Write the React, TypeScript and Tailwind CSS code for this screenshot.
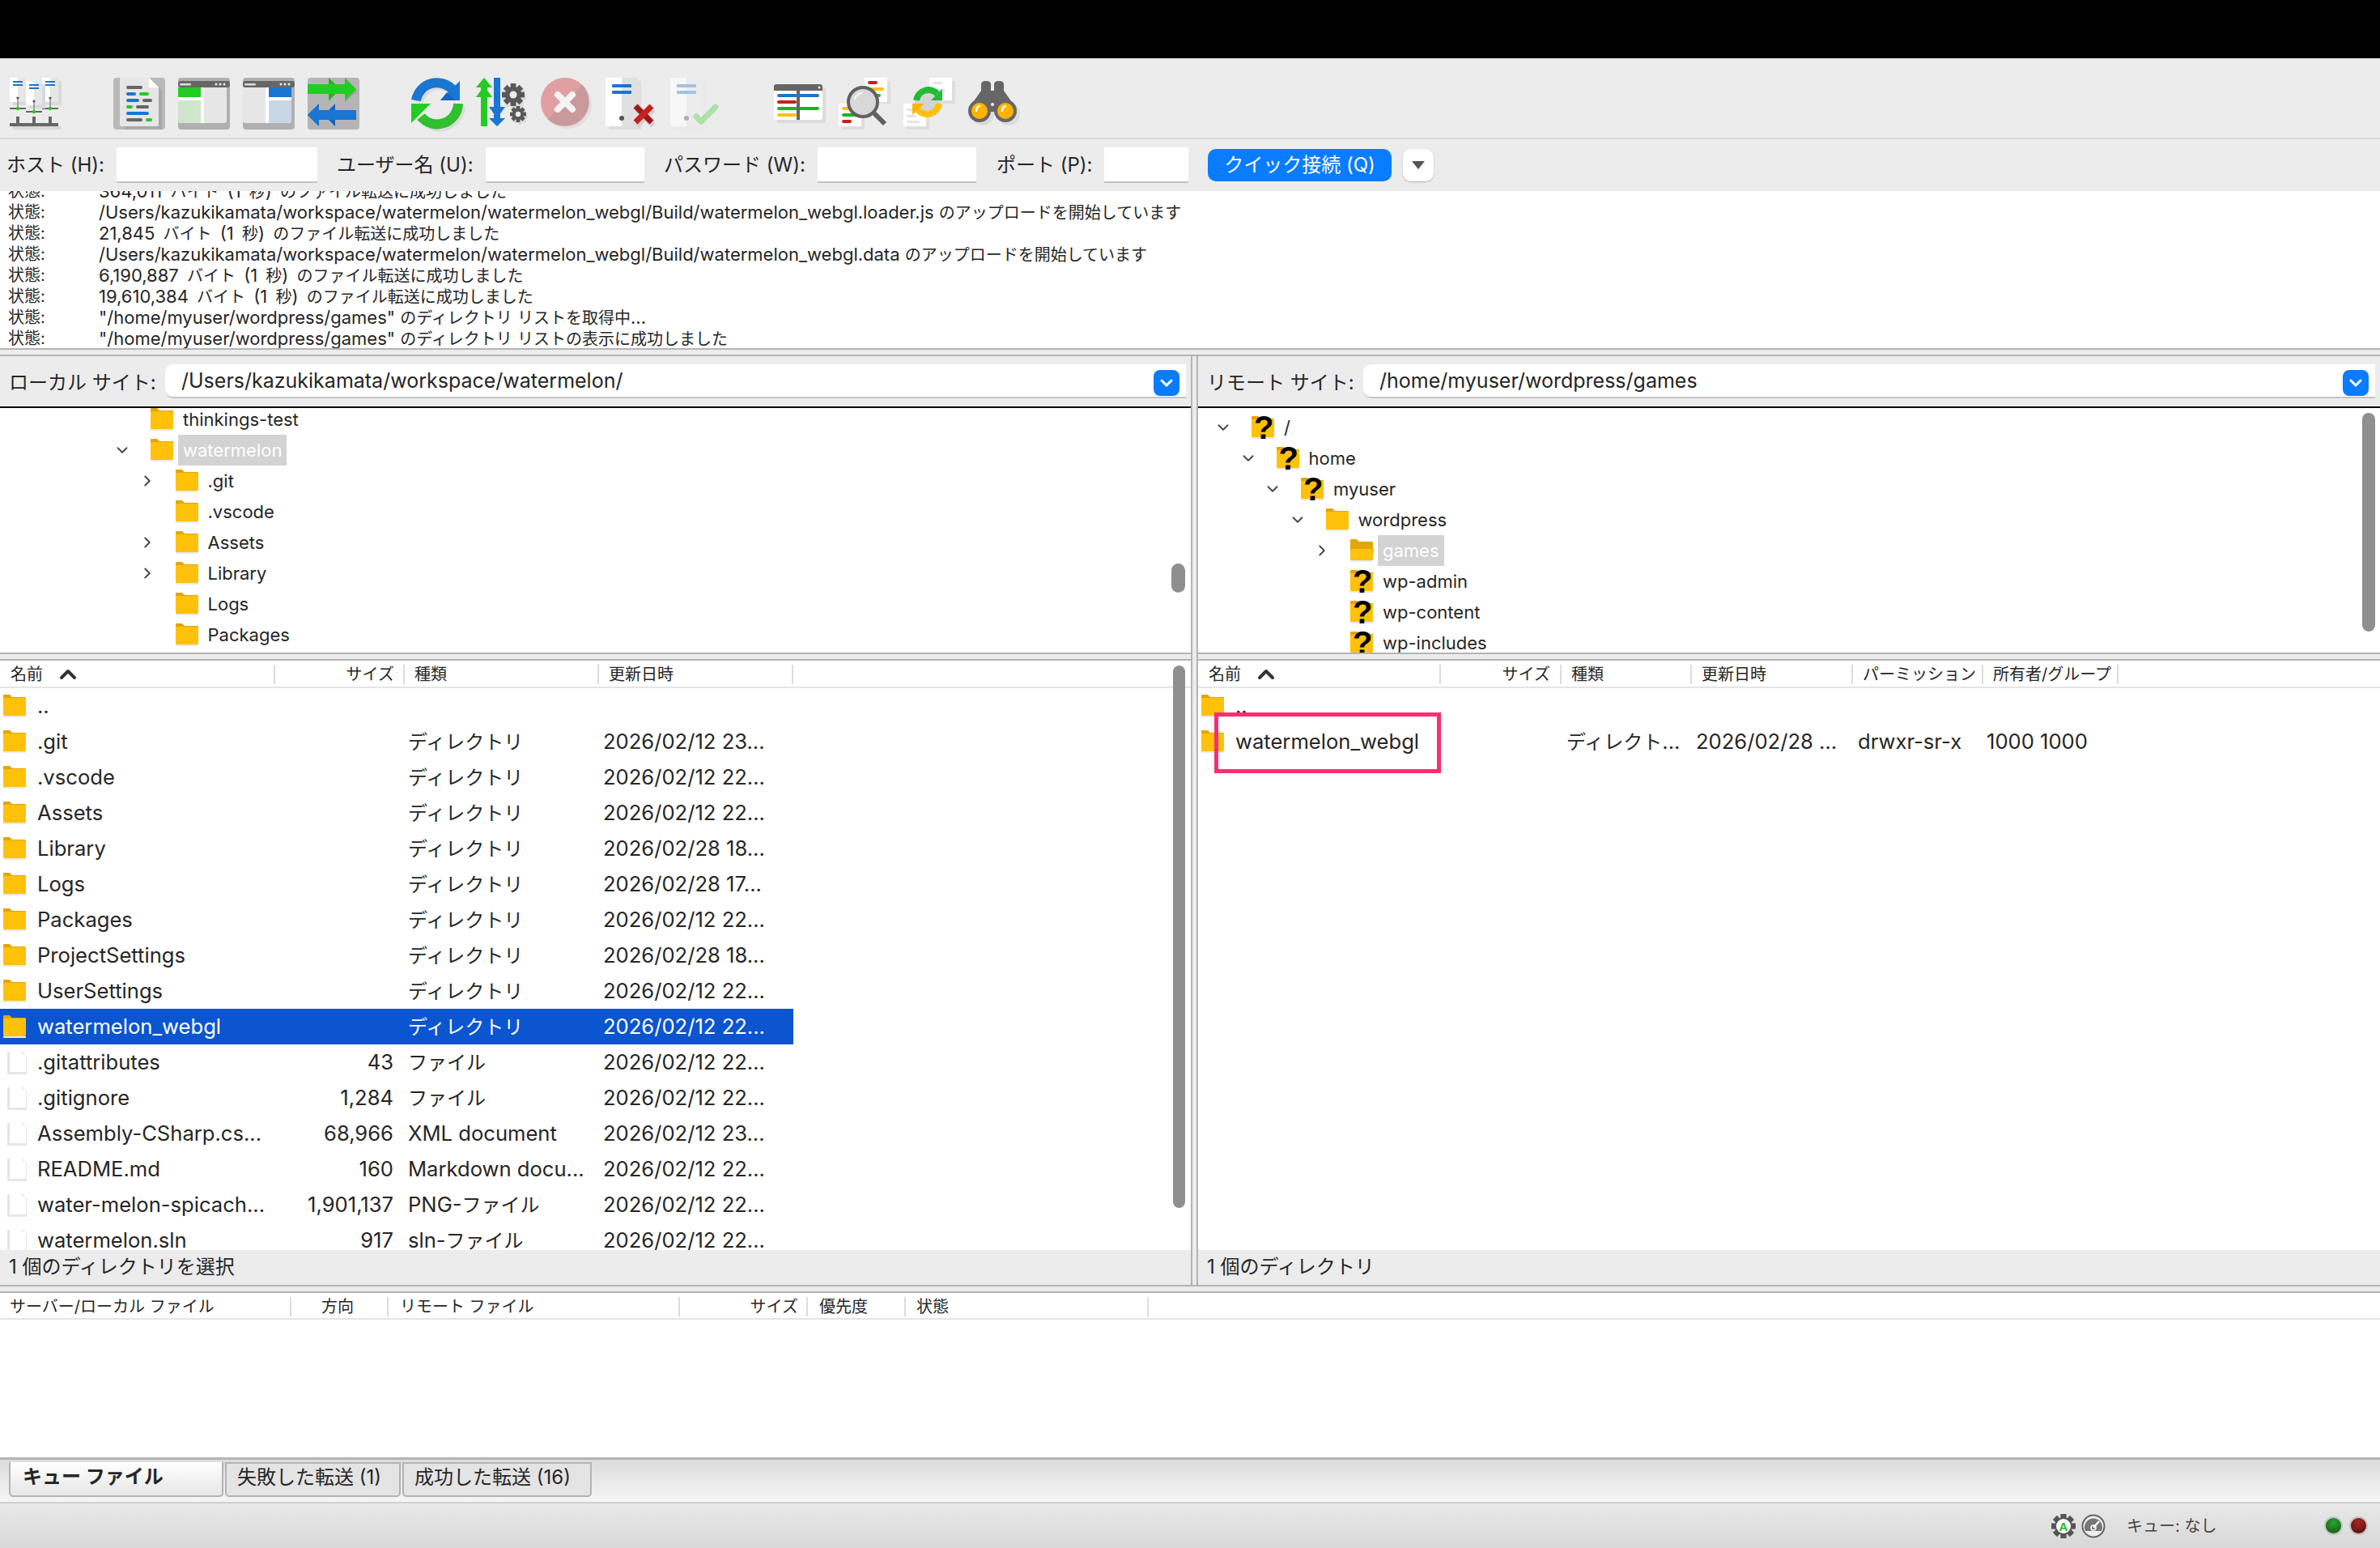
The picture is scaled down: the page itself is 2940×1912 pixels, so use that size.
import { ChevronDown, ChevronRight, ChevronUp } from "lucide-react";

const iconClass = "w-16 h-16 shrink-0 overflow-visible";

// Japanese runs are set a little smaller than the latin around them
function T({ s, ja }: { s: string; ja: string }) {
  return (
    <>
      {s.split(/([\u3000-\u30ff\u4e00-\u9fff]+)/).map((part, i) =>
        i % 2 === 1 ? (
          <span key={i} className={ja}>
            {part}
          </span>
        ) : (
          part
        ),
      )}
    </>
  );
}

function Gear({ cx, cy, r, fill = "#585858", hole = "#ececec" }: { cx: number; cy: number; r: number; fill?: string; hole?: string }) {
  const angles = [0, 45, 90, 135];
  return (
    <g>
      {angles.map((a) => (
        <rect
          key={a}
          x={cx - r * 0.24}
          y={cy - r}
          width={r * 0.48}
          height={r * 2}
          fill={fill}
          transform={`rotate(${a} ${cx} ${cy})`}
        />
      ))}
      <circle cx={cx} cy={cy} r={r * 0.72} fill={fill} />
      <circle cx={cx} cy={cy} r={r * 0.32} fill={hole} />
    </g>
  );
}

function SiteManagerIcon() {
  const server = (x: number, y: number) => (
    <g key={x}>
      <rect x={x + 4} y={y + 4} width="20" height="30" fill="#d9d9d9" />
      <rect x={x} y={y} width="20" height="30" fill="#e6e6e6" />
      <rect x={x} y={y} width="10" height="30" fill="#fff" />
      <rect x={x + 4} y={y + 4} width="12" height="2" fill="#1976d2" />
      <rect x={x + 4} y={y + 8} width="12" height="2" fill="#1976d2" />
      <rect x={x + 9.5} y={y + 25} width="1" height="13" fill="#666" />
      <circle cx={x + 10} cy={y + 25} r="1.6" fill="#555" />
      <rect x={x} y={y + 37} width="20" height="2" fill="#666" />
      <circle cx={x + 10} cy={y + 38} r="2.2" fill="#22cc22" />
    </g>
  );
  return (
    <svg className={iconClass} viewBox="0 0 64 64">
      <rect x="4" y="60" width="60" height="4" fill="#d9d9d9" />
      {server(0, 0)}
      {server(40, 0)}
      {server(20, 4)}
      <rect x="8" y="48" width="4" height="8" fill="#666" />
      <rect x="28" y="48" width="4" height="8" fill="#666" />
      <rect x="48" y="48" width="4" height="8" fill="#666" />
      <rect y="56" width="60" height="4" fill="#666" />
    </svg>
  );
}

function LogIcon() {
  const bars: [number, number, number, string][] = [
    [16, 10, 20, "#666"], [16, 18, 12, "#1976d2"], [32, 18, 12, "#22cc22"], [16, 26, 16, "#1976d2"], [36, 26, 12, "#666"],
    [16, 34, 8, "#22cc22"], [28, 34, 16, "#666"], [16, 42, 28, "#1976d2"], [16, 50, 20, "#666"], [40, 50, 8, "#22cc22"],
  ];
  return (
    <svg className={iconClass} viewBox="0 0 64 64">
      <rect width="64" height="64" rx="4" fill="#b9b9b9" />
      <path d="M12 4 H48 L60 16 V64 H14 Z" fill="#a8a8a8" />
      <path d="M8 0 H44 L56 12 V58 Q56 60 54 60 H10 Q8 60 8 58 Z" fill="#e6e6e6" />
      <path d="M44 0 L56 12 H44 Z" fill="#fff" />
      {bars.map(([x, y, w, c]) => (
        <rect key={`${x}-${y}`} x={x} y={y} width={w} height="4" rx="2" fill={c} />
      ))}
    </svg>
  );
}

function PaneIcon({ side }: { side: "left" | "right" }) {
  const left = side === "left";
  return (
    <svg className={iconClass} viewBox="0 0 64 64">
      <rect width="64" height="64" rx="4" fill="#b0b0b0" />
      <rect y="4" width="60" height="52" rx="3" fill="#e6e6e6" />
      <rect y="4" width="64" height="8" rx="3" fill="#666" />
      <rect x="2" y="7" width="14" height="2.6" rx="1.3" fill="#ddd" />
      <circle cx="47" cy="8" r="1.5" fill="#eee" />
      <circle cx="52" cy="8" r="1.5" fill="#eee" />
      <circle cx="57" cy="8" r="1.5" fill="#eee" />
      {left ? (
        <g>
          <rect y="12" width="28" height="12" fill="#22cc22" />
          <rect y="24" width="32" height="4" fill="#fff" />
          <path d="M0 28 H28 V56 H3 Q0 56 0 53 Z" fill="#cfe5cc" />
          <rect x="28" y="12" width="4" height="44" fill="#fff" />
        </g>
      ) : (
        <g>
          <rect x="32" y="12" width="28" height="12" fill="#1976d2" />
          <rect x="28" y="24" width="32" height="4" fill="#fff" />
          <path d="M32 28 H60 V53 Q60 56 57 56 H32 Z" fill="#c8d6e5" />
          <rect x="28" y="12" width="4" height="44" fill="#fff" />
        </g>
      )}
    </svg>
  );
}

function TransferIcon() {
  return (
    <svg className={iconClass} viewBox="0 0 64 64">
      <rect width="64" height="64" rx="4" fill="#b5b5b5" />
      <path d="M26 4 L38 16 L26 30 Z M46 4 L62 16 L46 30 Z" fill="#9c9c9c" />
      <path d="M0 8 H26 V0 L40 14 L26 28 V20 H0 Z" fill="#1fb31f" />
      <path d="M0 8 H46 V0 L60 14 L46 28 V20 H0 Z" fill="#22cc22" />
      <path d="M14 32 V60 L0 46 Z" fill="#1976d2" />
      <path d="M34 32 L20 46 L34 60 V52 H60 V40 H34 Z" fill="#1565c0" />
      <path d="M14 32 V40 H60 V52 H14 V60 L0 46 Z" fill="#1976d2" />
    </svg>
  );
}

function RefreshIcon() {
  return (
    <svg className={iconClass} viewBox="0 0 64 64">
      <path d="M9 31 A26 26 0 0 1 55 19 M61 35 A26 26 0 0 1 15 51" fill="none" stroke="#dcdcdc" strokeWidth="12" />
      <path d="M6 28 A26 26 0 0 1 52 16" fill="none" stroke="#1976d2" strokeWidth="12" />
      <path d="M60 4 V28 H36 Z" fill="#1976d2" />
      <path d="M44 18 L36 28 H54 Z" fill="#1565c0" />
      <path d="M58 32 A26 26 0 0 1 12 48" fill="none" stroke="#2fbf2f" strokeWidth="12" />
      <path d="M0 32 H24 L0 56 Z" fill="#22cc22" />
    </svg>
  );
}

function FilterIcon() {
  return (
    <svg className={iconClass} viewBox="0 0 64 64">
      <rect x="6" y="10" width="8" height="50" fill="#22cc22" />
      <path d="M10 0 L20 12 H0 Z M10 10 L20 24 H0 Z" fill="#22cc22" />
      <rect x="22" y="0" width="8" height="50" fill="#1976d2" />
      <path d="M16 36 H36 L26 50 Z M16 50 H36 L26 60 Z" fill="#1976d2" />
      <Gear cx={47} cy={24} r={15} fill="#dcdcdc" hole="#dcdcdc" />
      <Gear cx={54} cy={48} r={10} fill="#dcdcdc" hole="#dcdcdc" />
      <Gear cx={46} cy={21} r={14} />
      <Gear cx={52} cy={45} r={10} />
    </svg>
  );
}

function CancelIcon() {
  return (
    <svg className={iconClass} viewBox="0 0 64 64">
      <circle cx="33" cy="33" r="30" fill="#e0e0e0" />
      <circle cx="30" cy="30" r="30" fill="#e0a0a2" />
      <path d="M51.2 8.8 A30 30 0 0 1 8.8 51.2 Z" fill="#c99a9c" />
      <path d="M21 21 L39 39 M39 21 L21 39" stroke="#f4f4f4" strokeWidth="8" strokeLinecap="round" />
    </svg>
  );
}

function DocServerIcon({ faded }: { faded?: boolean }) {
  return (
    <svg className={iconClass} viewBox="0 0 64 64">
      <rect x="4" y="4" width="40" height="60" fill={faded ? "#e9e9e9" : "#dedede"} />
      <rect width="40" height="60" fill={faded ? "#ececec" : "#e0e0e0"} />
      <rect width="20" height="60" fill={faded ? "#f7f7f7" : "#fff"} />
      <rect x="8" y="8" width="24" height="4" rx="1" fill={faded ? "#a3c2e6" : "#1976d2"} />
      <rect x="8" y="16" width="24" height="4" rx="1" fill={faded ? "#a3c2e6" : "#1976d2"} />
      <circle cx="20" cy="50" r="3" fill={faded ? "#b0b0b0" : "#555"} />
      {faded ? (
        <path d="M32 48 L38 54 L56 36" fill="none" stroke="#aee0a8" strokeWidth="7" strokeLinecap="round" strokeLinejoin="round" />
      ) : (
        <g>
          <path d="M37 37 L57 57 M57 37 L37 57" stroke="#d0d0d0" strokeWidth="7" transform="translate(2 2)" />
          <path d="M37 35 L57 55" stroke="#a01818" strokeWidth="7" />
          <path d="M57 35 L37 55" stroke="#c62020" strokeWidth="7" />
        </g>
      )}
    </svg>
  );
}

function TableIcon() {
  return (
    <svg className={iconClass} viewBox="0 0 64 64">
      <rect x="4" y="12" width="60" height="44" rx="3" fill="#dcdcdc" />
      <rect y="8" width="60" height="44" rx="3" fill="#fff" />
      <path d="M0 16 V11 Q0 8 3 8 H57 Q60 8 60 11 V16 Z" fill="#666" />
      <circle cx="56" cy="12" r="1.5" fill="#eee" />
      <rect x="4" y="20" width="52" height="4" rx="2" fill="#1976d2" />
      <rect x="4" y="28" width="24" height="4" rx="2" fill="#c62020" />
      <rect x="4" y="36" width="52" height="4" rx="2" fill="#1fb31f" />
      <rect x="4" y="44" width="24" height="4" rx="2" fill="#ffc107" />
      <rect x="28" y="16" width="4" height="36" fill="#666" />
    </svg>
  );
}

function SearchIcon() {
  return (
    <svg className={iconClass} viewBox="0 0 64 64">
      <rect x="36" y="4" width="28" height="28" fill="#dedede" />
      <rect x="4" y="36" width="28" height="28" fill="#dedede" />
      <rect x="32" width="28" height="30" rx="1" fill="#fff" />
      <rect y="32" width="28" height="28" rx="1" fill="#fff" />
      <rect x="36" y="4" width="12" height="4" rx="2" fill="#c62020" />
      <rect x="36" y="12" width="20" height="4" rx="2" fill="#ffc107" />
      <rect x="36" y="20" width="16" height="4" rx="2" fill="#1fb31f" />
      <rect x="4" y="36" width="16" height="4" rx="2" fill="#ffc107" />
      <rect x="4" y="44" width="20" height="4" rx="2" fill="#1fb31f" />
      <rect x="4" y="52" width="12" height="4" rx="2" fill="#c62020" />
      <circle cx="30" cy="30" r="18" fill="#d8d8d8" stroke="#616161" strokeWidth="4" />
      <path d="M20 26 Q22 20 28 19" fill="none" stroke="#f4f4f4" strokeWidth="2.5" strokeLinecap="round" />
      <path d="M43 43 L57 57" stroke="#616161" strokeWidth="6" />
    </svg>
  );
}

function SyncIcon() {
  return (
    <svg className={iconClass} viewBox="0 0 64 64">
      <rect x="36" y="4" width="28" height="28" fill="#dedede" />
      <rect x="4" y="36" width="28" height="28" fill="#dedede" />
      <rect x="32" width="28" height="28" rx="1" fill="#fff" />
      <rect y="32" width="28" height="28" rx="1" fill="#fff" />
      <rect x="36" y="5" width="12" height="3" rx="1.5" fill="#e4e4e4" />
      <rect x="40" y="14" width="12" height="3" rx="1.5" fill="#e4e4e4" />
      <rect x="4" y="38" width="12" height="3" rx="1.5" fill="#e4e4e4" />
      <rect x="4" y="46" width="12" height="3" rx="1.5" fill="#e4e4e4" />
      <rect x="4" y="53" width="16" height="3" rx="1.5" fill="#e4e4e4" />
      <circle cx="30" cy="30" r="16" fill="#d4d4d4" />
      <path d="M16 28 A15 15 0 0 1 42 20" fill="none" stroke="#22bb33" strokeWidth="8" />
      <path d="M48 14 V28 H34 Z" fill="#22bb33" />
      <path d="M44 32 A15 15 0 0 1 18 40" fill="none" stroke="#ffc107" strokeWidth="8" />
      <path d="M11 32 H26 L11 46 Z" fill="#ffb300" />
    </svg>
  );
}

function BinocularsIcon() {
  return (
    <svg className={iconClass} viewBox="0 0 64 64">
      <circle cx="18" cy="45" r="14" fill="#dcdcdc" />
      <circle cx="50" cy="45" r="14" fill="#dcdcdc" />
      <path d="M16 8 Q16 4 22 4 Q28 4 28 8 V16 H32 V8 Q32 4 38 4 Q44 4 44 8 V16 L58 36 V42 H2 V36 L16 16 Z" fill="#666" />
      <circle cx="14" cy="41" r="14" fill="#666" />
      <circle cx="46" cy="41" r="14" fill="#666" />
      <circle cx="14" cy="41" r="10" fill="#ffb300" />
      <circle cx="46" cy="41" r="10" fill="#ffb300" />
      <path d="M10 41 Q10 36 14 35 M42 41 Q42 36 46 35" fill="none" stroke="#fff" strokeWidth="2.4" strokeLinecap="round" />
      <circle cx="30" cy="33" r="2" fill="#f4f4f4" />
    </svg>
  );
}

function Folder({ open }: { open?: boolean }) {
  return (
    <svg className="w-7 h-[28px] shrink-0 overflow-visible" viewBox="0 0 28 28">
      <rect x="0" y="26" width="28" height="2" fill="#e8e8e8" />
      <path d="M0 1 Q0 0 1 0 H8 L11 3 H27 Q28 3 28 4 V24 Q28 26 26 26 H2 Q0 26 0 24 Z" fill={open ? "#e0a60a" : "#e3a508"} />
      {open ? (
        <path d="M0 15 Q0 12 4 12 H30 L27 26 H2 Q0 26 0 24 Z" fill="#ffc20e" />
      ) : (
        <path d="M0 5 Q0 4 1 4 H27 Q28 4 28 5 V24 Q28 26 26 26 H2 Q0 26 0 24 Z" fill="#ffc10a" />
      )}
    </svg>
  );
}

function FileIcon() {
  return (
    <svg className="w-7 h-[28px] shrink-0 overflow-visible" viewBox="0 0 28 28">
      <path d="M5 1 H24 L29 6 V29 H5 Z" fill="#e6e6e6" />
      <path d="M8 -1 H23 L28 4 V26 H8 Z" fill="#fff" />
      <path d="M23 -1 L28 4 H23 Z" fill="#f0f0f0" />
    </svg>
  );
}

function QuestionFolder() {
  return (
    <span className="relative w-7 h-[28px] shrink-0">
      <Folder />
      <span className="absolute -top-[7px] left-[3px] font-['Liberation_Sans',sans-serif] text-[40px] leading-[42px] font-bold text-black">?</span>
    </span>
  );
}

const logLines = [
  "364,011 バイト (1 秒) のファイル転送に成功しました",
  "/Users/kazukikamata/workspace/watermelon/watermelon_webgl/Build/watermelon_webgl.loader.js のアップロードを開始しています",
  "21,845 バイト (1 秒) のファイル転送に成功しました",
  "/Users/kazukikamata/workspace/watermelon/watermelon_webgl/Build/watermelon_webgl.data のアップロードを開始しています",
  "6,190,887 バイト (1 秒) のファイル転送に成功しました",
  "19,610,384 バイト (1 秒) のファイル転送に成功しました",
  "\"/home/myuser/wordpress/games\" のディレクトリ リストを取得中...",
  "\"/home/myuser/wordpress/games\" のディレクトリ リストの表示に成功しました",
];

const localTree = [
  { name: "thinkings-test", depth: 0 },
  { name: "watermelon", depth: 0, open: true, selected: true },
  { name: ".git", depth: 1, closed: true },
  { name: ".vscode", depth: 1 },
  { name: "Assets", depth: 1, closed: true },
  { name: "Library", depth: 1, closed: true },
  { name: "Logs", depth: 1 },
  { name: "Packages", depth: 1 },
];

const remoteTree = [
  { name: "/", depth: 0, open: true, unknown: true },
  { name: "home", depth: 1, open: true, unknown: true },
  { name: "myuser", depth: 2, open: true, unknown: true },
  { name: "wordpress", depth: 3, open: true },
  { name: "games", depth: 4, closed: true, selected: true, folderOpen: true },
  { name: "wp-admin", depth: 4, unknown: true },
  { name: "wp-content", depth: 4, unknown: true },
  { name: "wp-includes", depth: 4, unknown: true },
];

const localFiles = [
  { name: "..", size: "", type: "", date: "" },
  { name: ".git", size: "", type: "ディレクトリ", date: "2026/02/12 23..." },
  { name: ".vscode", size: "", type: "ディレクトリ", date: "2026/02/12 22..." },
  { name: "Assets", size: "", type: "ディレクトリ", date: "2026/02/12 22..." },
  { name: "Library", size: "", type: "ディレクトリ", date: "2026/02/28 18..." },
  { name: "Logs", size: "", type: "ディレクトリ", date: "2026/02/28 17..." },
  { name: "Packages", size: "", type: "ディレクトリ", date: "2026/02/12 22..." },
  { name: "ProjectSettings", size: "", type: "ディレクトリ", date: "2026/02/28 18..." },
  { name: "UserSettings", size: "", type: "ディレクトリ", date: "2026/02/12 22..." },
  { name: "watermelon_webgl", size: "", type: "ディレクトリ", date: "2026/02/12 22...", selected: true },
  { name: ".gitattributes", size: "43", type: "ファイル", date: "2026/02/12 22...", file: true },
  { name: ".gitignore", size: "1,284", type: "ファイル", date: "2026/02/12 22...", file: true },
  { name: "Assembly-CSharp.cs...", size: "68,966", type: "XML document", date: "2026/02/12 23...", file: true },
  { name: "README.md", size: "160", type: "Markdown docu...", date: "2026/02/12 22...", file: true },
  { name: "water-melon-spicach...", size: "1,901,137", type: "PNG-ファイル", date: "2026/02/12 22...", file: true },
  { name: "watermelon.sln", size: "917", type: "sln-ファイル", date: "2026/02/12 22...", file: true },
];

function SiteBar({ label, path, labelWidth }: { label: string; path: string; labelWidth: string }) {
  return (
    <div className="h-[62px] shrink-0 flex items-center pl-[11px] pr-[6px] bg-[#ececec] border-b-0">
      <span className={`${labelWidth} shrink-0 pt-[3px] text-[24px] whitespace-nowrap`}>{label}</span>
      <div className="relative flex-1 h-[42px] -mt-[1px] bg-white rounded-l-[10px] border-b-2 border-[#c4c4c4] flex items-center pl-5 pt-[3px] text-[25px] whitespace-nowrap">
        {path}
        <span className="absolute right-[8px] top-[7px] w-[32px] h-[32px] rounded-[8px] bg-[#0a7cff] flex items-center justify-center">
          <ChevronDown className="w-6 h-6 text-white" strokeWidth={3} />
        </span>
      </div>
    </div>
  );
}

function TreeRow({ row, left }: { row: any; left: number }) {
  return (
    <div className="h-[38px] flex items-center relative" style={{ paddingLeft: left + row.depth * 30.5 }}>
      <span className="w-[34px] shrink-0 -ml-[7px] mr-[18px] flex items-center justify-center text-[#444]">
        {row.open && <ChevronDown className="w-[22px] h-[22px]" strokeWidth={2} />}
        {row.closed && <ChevronRight className="w-[22px] h-[22px]" strokeWidth={2} />}
      </span>
      {row.unknown ? <QuestionFolder /> : <Folder open={row.folderOpen} />}
      <span
        className={
          row.selected
            ? "ml-[6px] -mr-2 px-[6px] h-[38px] leading-[38px] bg-[#d3d3d3] text-white text-[22px]"
            : "ml-[12px] text-[22px] whitespace-nowrap"
        }
      >
        {row.name}
      </span>
    </div>
  );
}

function HeadCell({ w, children, className = "" }: { w: string; children?: React.ReactNode; className?: string }) {
  return (
    <div className={`${w} shrink-0 h-[24px] border-r-2 border-[#dcdcdc] flex items-center whitespace-nowrap ${className}`}>
      {children}
    </div>
  );
}

function SortHead({ w }: { w: string }) {
  return (
    <HeadCell w={w} className="pl-[13px] gap-[15px]">
      名前 <ChevronUp className="w-[32px] h-[32px] text-[#333]" strokeWidth={3} />
    </HeadCell>
  );
}

function Sash() {
  return <div className="h-[10px] shrink-0 border-y-2 border-[#b4b4b4] bg-[#ececec]" />;
}

export default function App() {
  return (
    <div className="w-[2940px] h-[1912px] flex flex-col overflow-hidden bg-[#ececec] text-[#262626] font-['Inter','Noto_Sans_CJK_JP',sans-serif]">
      <div className="h-[72px] shrink-0 bg-black" />

      {/* toolbar */}
      <div className="h-[100px] shrink-0 flex items-start pt-6 pl-3 gap-4 border-b-2 border-[#dcdcdc]">
        <SiteManagerIcon />
        <div className="w-8 shrink-0" />
        <LogIcon />
        <PaneIcon side="left" />
        <PaneIcon side="right" />
        <TransferIcon />
        <div className="w-8 shrink-0" />
        <RefreshIcon />
        <FilterIcon />
        <CancelIcon />
        <DocServerIcon />
        <DocServerIcon faded />
        <div className="w-8 shrink-0" />
        <TableIcon />
        <SearchIcon />
        <SyncIcon />
        <BinocularsIcon />
      </div>

      {/* quick connect */}
      <div className="h-[64px] shrink-0 flex items-center pl-2 text-[24px]">
        <span className="w-[136px] shrink-0 whitespace-nowrap">ホスト (H):</span>
        <div className="w-[248px] h-[44px] shrink-0 bg-white border-b-2 border-[#c4c4c4]" />
        <span className="w-[208px] shrink-0 pl-6 whitespace-nowrap">ユーザー名 (U):</span>
        <div className="w-[196px] h-[44px] shrink-0 bg-white border-b-2 border-[#c4c4c4]" />
        <span className="w-[214px] shrink-0 pl-6 whitespace-nowrap">パスワード (W):</span>
        <div className="w-[196px] h-[44px] shrink-0 bg-white border-b-2 border-[#c4c4c4]" />
        <span className="w-[158px] shrink-0 pl-[25px] whitespace-nowrap">ポート (P):</span>
        <div className="w-[104px] h-[44px] shrink-0 bg-white border-b-2 border-[#c4c4c4]" />
        <button className="ml-6 w-[227px] h-[40px] shrink-0 rounded-[10px] bg-[#0a7cff] text-white text-[24px] flex items-center justify-center whitespace-nowrap">
          クイック接続 (Q)
        </button>
        <button className="ml-[14px] w-[38px] h-[40px] shrink-0 rounded-[10px] bg-white shadow-[0_1px_2px_#00000040] flex items-center justify-center">
          <span className="w-0 h-0 border-x-[8px] border-x-transparent border-t-[10px] border-t-[#555]" />
        </button>
      </div>

      {/* message log */}
      <div className="h-[194px] shrink-0 bg-white overflow-hidden text-[22px]">
        <div className="-mt-[13px]">
          {logLines.map((line) => (
            <div key={line} className="h-[26px] flex items-center pl-[10px] whitespace-nowrap">
              <span className="w-[112px] shrink-0 text-[20px]">状態:</span>
              <span className={line.includes("バイト") ? "[word-spacing:4px]" : ""}>
                <T s={line} ja="text-[20px]" />
              </span>
            </div>
          ))}
        </div>
      </div>
      <Sash />

      {/* local and remote panes */}
      <div className="h-[1147px] shrink-0 flex">
        <div className="w-[1471px] shrink-0 flex flex-col relative">
          <SiteBar label="ローカル サイト:" path="/Users/kazukikamata/workspace/watermelon/" labelWidth="w-[193px]" />
          <div className="h-[304px] shrink-0 border-t-2 border-black bg-white overflow-hidden">
            <div className="-mt-[5px]">
              {localTree.map((row) => (
                <TreeRow key={row.name} row={row} left={141} />
              ))}
            </div>
          </div>
          <Sash />
          <div className="h-[34px] shrink-0 bg-white border-b-2 border-[#e4e4e4] flex items-center pt-[2px] text-[20px]">
            <SortHead w="w-[340px]" />
            <HeadCell w="w-[160px]" className="justify-end pr-[11px]">サイズ</HeadCell>
            <HeadCell w="w-[240px]" className="pl-3">種類</HeadCell>
            <HeadCell w="w-[240px]" className="pl-3">更新日時</HeadCell>
          </div>
          <div className="h-[694px] shrink-0 bg-white overflow-hidden text-[25.6px]">
            {localFiles.map((f) => (
              <div key={f.name} className={`h-[44px] w-[980px] flex items-center ${f.selected ? "bg-[#0b55d0] text-white" : ""}`}>
                <div className="w-[340px] shrink-0 flex items-center pl-[4px] gap-[14px] whitespace-nowrap">
                  {f.file ? <FileIcon /> : <Folder />}
                  {f.name}
                </div>
                <div className="w-[160px] shrink-0 text-right pr-[14px]">{f.size}</div>
                <div className="w-[240px] shrink-0 pl-[4px] whitespace-nowrap">
                  <T s={f.type} ja="text-[24px]" />
                </div>
                <div className="w-[240px] shrink-0 pl-[5px] whitespace-nowrap">{f.date}</div>
              </div>
            ))}
          </div>
          <div className="h-[43px] shrink-0 flex items-center pl-[11px] pb-[2px] text-[24px]">1 個のディレクトリを選択</div>
          <div className="absolute left-[1447px] top-[256px] w-[17px] h-[36px] rounded-full bg-[#8f8f8f]" />
          <div className="absolute left-[1449px] top-[382px] w-[15px] h-[670px] rounded-full bg-[#8f8f8f]" />
        </div>

        <div className="w-[9px] shrink-0 border-x-2 border-[#b4b4b4] bg-[#ececec]" />

        <div className="flex-1 flex flex-col relative">
          <SiteBar label="リモート サイト:" path="/home/myuser/wordpress/games" labelWidth="w-[193px]" />
          <div className="h-[304px] shrink-0 border-t-2 border-black bg-white overflow-hidden pt-[5px]">
            {remoteTree.map((row) => (
              <TreeRow key={row.name} row={row} left={21} />
            ))}
          </div>
          <Sash />
          <div className="h-[34px] shrink-0 bg-white border-b-2 border-[#e4e4e4] flex items-center pt-[2px] text-[20px]">
            <SortHead w="w-[300px]" />
            <HeadCell w="w-[149px]" className="justify-end pr-3">サイズ</HeadCell>
            <HeadCell w="w-[161px]" className="pl-3">種類</HeadCell>
            <HeadCell w="w-[199px]" className="pl-3">更新日時</HeadCell>
            <HeadCell w="w-[161px]" className="pl-3">パーミッション</HeadCell>
            <HeadCell w="w-[167px]" className="pl-3">所有者/グループ</HeadCell>
          </div>
          <div className="h-[694px] shrink-0 bg-white overflow-hidden text-[25.6px] relative">
            <div className="h-[44px] flex items-center pl-[4px] gap-[14px]">
              <Folder />
              ..
            </div>
            <div className="h-[44px] flex items-center">
              <div className="w-[300px] shrink-0 flex items-center pl-[4px] gap-[14px] whitespace-nowrap">
                <Folder />
                watermelon_webgl
              </div>
              <div className="w-[149px] shrink-0" />
              <div className="w-[161px] shrink-0 pl-[6px] whitespace-nowrap">
                <T s="ディレクト..." ja="text-[24px]" />
              </div>
              <div className="w-[199px] shrink-0 pl-[5px] whitespace-nowrap">2026/02/28 ...</div>
              <div className="w-[161px] shrink-0 pl-[6px] whitespace-nowrap">drwxr-sr-x</div>
              <div className="w-[167px] shrink-0 pl-[4px] whitespace-nowrap">1000 1000</div>
            </div>
            {/* annotation box */}
            <div className="absolute left-[20px] top-[30px] w-[280px] h-[75px] border-[5px] border-[#f7306f]" />
          </div>
          <div className="h-[43px] shrink-0 flex items-center pl-[11px] pb-[2px] text-[24px]">1 個のディレクトリ</div>
          <div className="absolute left-[1438px] top-[70px] w-[16px] h-[270px] rounded-full bg-[#8f8f8f]" />
        </div>
      </div>

      <Sash />

      {/* queue */}
      <div className="h-[33px] shrink-0 bg-white border-b-2 border-[#e4e4e4] flex items-center pt-[2px] text-[20px]">
        <HeadCell w="w-[360px]" className="pl-3">サーバー/ローカル ファイル</HeadCell>
        <HeadCell w="w-[120px]" className="justify-end pr-[41px]">方向</HeadCell>
        <HeadCell w="w-[360px]" className="pl-[14px]">リモート ファイル</HeadCell>
        <HeadCell w="w-[158px]" className="justify-end pr-[10px]">サイズ</HeadCell>
        <HeadCell w="w-[121px]" className="pl-[14px]">優先度</HeadCell>
        <HeadCell w="w-[300px]" className="pl-[13px]">状態</HeadCell>
      </div>
      <div className="h-[170px] shrink-0 bg-white" />
      <div className="h-[3px] shrink-0 bg-[#b4b4b4]" />

      {/* tabs */}
      <div className="h-[54px] shrink-0 flex items-start pl-[11px] pt-[3px] text-[24px] border-b-2 border-[#d0d0d0] bg-[linear-gradient(#dcdcdc,#f6f6f6)]">
        <div className="w-[265px] h-[43px] shrink-0 pl-[15px] pb-[5px] flex items-center font-bold rounded-b-[5px] border-x-2 border-b-2 border-[#b4b4b4] bg-[linear-gradient(#ffffff,#e6e6e6)]">
          キュー ファイル
        </div>
        <div className="ml-[2px] w-[217px] h-[43px] shrink-0 pl-[13px] pb-[5px] flex items-center rounded-b-[5px] border-2 border-[#b4b4b4] bg-[#e4e4e4]">
          失敗した転送 (1)
        </div>
        <div className="ml-[2px] w-[234px] h-[43px] shrink-0 pl-[13px] pb-[5px] flex items-center rounded-b-[5px] border-2 border-[#b4b4b4] bg-[#e4e4e4]">
          成功した転送 (16)
        </div>
      </div>

      {/* status bar */}
      <div className="flex-1 flex items-center justify-end bg-[linear-gradient(#e8e8e8,#d8d8d8)] text-[20px] text-[#444]">
        <svg className="w-[30px] h-[30px]" viewBox="0 0 30 30">
          <Gear cx={15} cy={15} r={15} fill="#555" hole="#555" />
          <circle cx="15" cy="15" r="9" fill="#fff" />
          <text x="15" y="20.5" textAnchor="middle" fontSize="15" fontWeight="700" fill="#22bb22" fontFamily="Liberation Sans">A</text>
        </svg>
        <svg className="ml-[7px] w-[30px] h-[30px]" viewBox="0 0 30 30">
          <circle cx="15" cy="15" r="13.5" fill="#eee" stroke="#666" strokeWidth="2" />
          <path d="M5 21 A11 11 0 1 1 25 21 Z" fill="#777" />
          <path d="M15 17 L22 9" stroke="#fff" strokeWidth="2" />
          <circle cx="15" cy="17" r="3" fill="none" stroke="#fff" strokeWidth="1.5" />
        </svg>
        <span className="ml-[26px] w-[244px] shrink-0 whitespace-nowrap">キュー: なし</span>
        <span className="w-[23px] h-[23px] shrink-0 rounded-full border-2 border-[#c4c4c4] bg-[radial-gradient(circle_at_50%_30%,#2f9f2f,#0a5c0a)]" />
        <span className="ml-[8px] mr-[15px] w-[23px] h-[23px] shrink-0 rounded-full border-2 border-[#c4c4c4] bg-[radial-gradient(circle_at_50%_30%,#a02828,#5c0a0a)]" />
      </div>
    </div>
  );
}
